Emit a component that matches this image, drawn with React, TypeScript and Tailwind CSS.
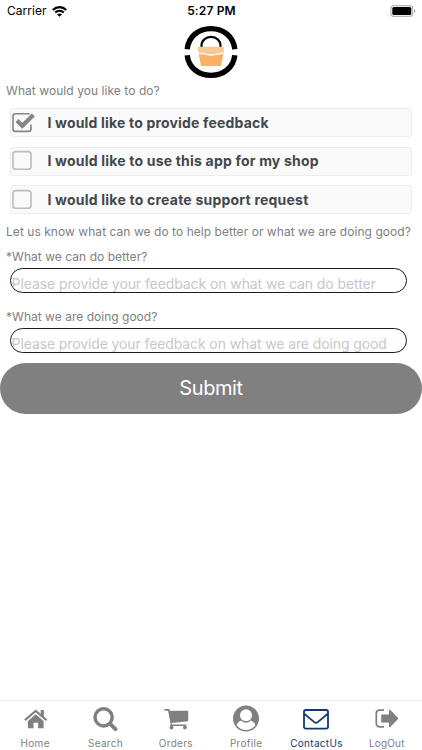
import type { ReactNode } from "react";

type OptionRowProps = {
  label: string;
  checked?: boolean;
  labelClass: string;
};

type FeedbackFieldProps = {
  label: string;
  placeholder: string;
  labelClass: string;
  placeholderClass: string;
};

type TabItemProps = {
  label: string;
  active?: boolean;
  labelClass: string;
  children: ReactNode;
};

function StatusBar() {
  return (
    <header className="grid h-[22px] grid-cols-3 items-center pr-[6px] pl-[7px] text-black">
      <div className="flex items-center gap-[5px]">
        <span className="text-[12px] leading-none tracking-[0.05px]">Carrier</span>
        <svg className="h-[11px] w-[15px]" viewBox="0 0 15 11" fill="none" stroke="#000">
          <path d="M.8 4C4.600.2 10.400.2 14.200 4" strokeWidth="2.300" />
          <path d="M3.200 6.600c2.500-2.300 6.100-2.300 8.600 0" strokeWidth="2.100" />
          <path d="M7.500 10.800 5 8.400c1.400-1.300 3.600-1.300 5 0z" fill="#000" stroke="none" />
        </svg>
      </div>
      <span className="text-center text-[12px] leading-none font-semibold tracking-[0.15px]">5:27 PM</span>
      <svg className="h-[12px] w-[26px] justify-self-end" viewBox="0 0 26 12">
        <rect x=".9" y=".6" width="21.800" height="10.800" rx="3" fill="#fff" stroke="#b5b5b5" strokeWidth="1.100" />
        <rect x="2.300" y="2" width="19" height="8" rx="1.500" />
        <path d="M24.200 4.200v3.600c1.500-.6 1.500-3 0-3.600z" fill="#8a8a8a" />
      </svg>
    </header>
  );
}

function ShopLogo() {
  return (
    <svg className="mx-auto mt-[3px] h-[54px] w-[54px]" viewBox="0 0 54 54">
      <path d="M3.200 24.200C4.500 11.500 14.500 3.600 27 3.600s22.500 7.900 23.800 20.600" fill="none" stroke="#000" strokeWidth="5.400" />
      <path d="M3.200 30.200C4.500 42.500 14.500 50.400 27 50.400s22.500-7.900 23.800-20.200" fill="none" stroke="#000" strokeWidth="5.400" />
      <path d="M17.500 22v-1.500a9.500 8.600 0 0 1 19 0V22" fill="none" stroke="#000" strokeWidth="2.200" />
      <path d="M13.800 21.800h26.400l-.5 6c-8 .5-9 1.600-12.700 1.600s-5-1.100-12.700-1.600z" fill="#fbc998" />
      <path d="M14.800 29c7 .3 8.500 1.700 12.200 1.700S32 29.300 39.300 29l-2.200 12H17z" fill="#fbb062" />
    </svg>
  );
}

function CheckMark({ checked }: { checked?: boolean }) {
  return (
    <svg className="h-[22px] w-[24px] shrink-0" viewBox="0 0 24 22" fill="none">
      {checked ? (
        <>
          <path d="M18.600 1.800H4.400A2.400 2.400 0 0 0 2 4.200v12.800a2.400 2.400 0 0 0 2.400 2.400h13.200a2.400 2.400 0 0 0 2.400-2.400v-4.400" stroke="#858585" strokeWidth="1.600" />
          <path d="m6 8.400 5.300 5.300L22.300 3" stroke="#858585" strokeWidth="4.200" />
        </>
      ) : (
        <rect x="2" y="1.600" width="18" height="17.600" rx="2.800" stroke="#bcbcbc" strokeWidth="1.600" />
      )}
    </svg>
  );
}

function OptionRow({ label, checked, labelClass }: OptionRowProps) {
  return (
    <label className="flex h-[29px] items-center rounded-[3px] border border-[#ededed] bg-[#fafafa]">
      <CheckMark checked={checked} />
      <span className={`ml-[12px] text-[14px] leading-none font-bold whitespace-nowrap text-[#43484d] ${labelClass}`}>
        {label}
      </span>
    </label>
  );
}

function FeedbackField({ label, placeholder, labelClass, placeholderClass }: FeedbackFieldProps) {
  return (
    <div>
      <div className={`pl-[6px] text-[12px] leading-[16px] whitespace-nowrap text-[#808080] ${labelClass}`}>{label}</div>
      <div className="mt-[3px] mr-[15.500px] ml-[10.400px] h-[25px] overflow-hidden rounded-full border-[1.500px] border-[#1c1c1c] pt-[6px] pl-[0.200px]">
        <div className={`text-[14px] leading-[17px] whitespace-nowrap text-[#c7c7cb] ${placeholderClass}`}>{placeholder}</div>
      </div>
    </div>
  );
}

function TabItem({ label, active, labelClass, children }: TabItemProps) {
  return (
    <div className={`flex flex-1 flex-col items-center ${active ? "text-[#0f3a6e]" : "text-[#808080]"}`}>
      <svg className="mt-[4px] h-[28px] w-[28px]" viewBox="0 0 28 28" fill="currentColor">
        {children}
      </svg>
      <span className={`mt-[4px] text-[10px] leading-[12px] ${labelClass}`}>{label}</span>
    </div>
  );
}

export default function App() {
  return (
    <div className="flex h-[750px] w-[422px] flex-col overflow-hidden bg-white font-[Inter,sans-serif]">
      <StatusBar />
      <main className="flex-1">
        <ShopLogo />
        <p className="mt-[4px] pl-[6px] text-[12px] leading-[16px] tracking-[0.06px] text-[#808080]">
          What would you like to do?
        </p>
        <div className="mt-[9px] mr-[10.400px] ml-[10.400px] flex flex-col gap-[9.700px]">
          <OptionRow label="I would like to provide feedback" checked labelClass="tracking-[0.18px]" />
          <OptionRow label="I would like to use this app for my shop" labelClass="tracking-[0.2px]" />
          <OptionRow label="I would like to create support request" labelClass="tracking-[0.22px]" />
        </div>
        <p className="mt-[10px] mb-[9px] pl-[6px] text-[12px] leading-[16px] tracking-[0.05px] whitespace-nowrap text-[#808080]">
          Let us know what can we do to help better or what we are doing good?
        </p>
        <div className="flex flex-col gap-[16px]">
          <FeedbackField
            label="*What we can do better?"
            placeholder="Please provide your feedback on what we can do better"
            labelClass="tracking-[0.04px]"
            placeholderClass="tracking-[-0.09px]"
          />
          <FeedbackField
            label="*What we are doing good?"
            placeholder="Please provide your feedback on what we are doing good"
            labelClass="tracking-[0.02px]"
            placeholderClass="tracking-[-0.11px]"
          />
        </div>
        <button
          type="button"
          className="mt-[10px] h-[51px] w-full rounded-full bg-[#808080] pb-[1px] text-[20px] tracking-[-0.400px] text-white"
        >
          Submit
        </button>
      </main>
      <nav className="flex h-[50px] border-t border-[#ececec]">
        <TabItem label="Home" labelClass="tracking-[0.3px]">
          <path d="m14.700 9.200 7.900 6.800v7.200h-5.500v-5.500h-4.600v5.500H6.900V16z" />
          <path d="M3.900 15.100 14.700 5.900l10.800 9.200" fill="none" stroke="currentColor" strokeWidth="2.100" />
          <path d="M19.700 4.900h3.200v8l-3.200-2.600z" />
        </TabItem>
        <TabItem label="Search" labelClass="tracking-[0.3px]">
          <circle cx="12.600" cy="12.300" r="8.600" fill="none" stroke="currentColor" strokeWidth="3.500" />
          <path d="m18.900 18.600 5.600 5.600" stroke="currentColor" strokeWidth="4" strokeLinecap="round" />
        </TabItem>
        <TabItem label="Orders" labelClass="tracking-[0.3px]">
          <path d="M2.500 4h4.800l.6 1.800h18.300v10.400L9.600 17.900l.3 1.500h14.300v1.700H8.300l.2-2.500L6.100 5.700H2.500z" />
          <circle cx="9.500" cy="22.500" r="1.900" />
          <circle cx="22.900" cy="22.500" r="1.900" />
        </TabItem>
        <TabItem label="Profile" labelClass="tracking-[0.3px]">
          <circle cx="14" cy="13.500" r="13" />
          <path d="M9.300 15.600c1.300 1.500 3 2.200 4.700 2.200s3.400-.7 4.700-2.200c2.400.8 4.300 2.700 4.700 4.700a11.600 11.600 0 0 1-18.800 0c.4-2 2.300-3.900 4.700-4.700z" fill="#fff" />
          <circle cx="14" cy="10.300" r="6" fill="#fff" />
        </TabItem>
        <TabItem label="ContactUs" active labelClass="tracking-[0.3px]">
          <rect x="2" y="5" width="24" height="18.600" rx="1.800" fill="none" stroke="currentColor" strokeWidth="1.800" />
          <path d="m2.500 9 9.800 8.200c1.100.9 2.300.9 3.400 0L25.500 9" fill="none" stroke="currentColor" strokeWidth="1.700" />
        </TabItem>
        <TabItem label="LogOut" labelClass="tracking-[0.2px]">
          <path d="M11 5.200H6.500a3.200 3.200 0 0 0-3.200 3.200v10.200a3.200 3.200 0 0 0 3.200 3.200H11" fill="none" stroke="currentColor" strokeWidth="1.700" />
          <path d="M8.200 9.500h7.700V5.700c0-1 .7-1.200 1.400-.6l7.500 7.600c.6.600.6 1 0 1.600l-7.500 7.600c-.7.600-1.400.4-1.400-.6v-3.800H8.200z" />
        </TabItem>
      </nav>
    </div>
  );
}
